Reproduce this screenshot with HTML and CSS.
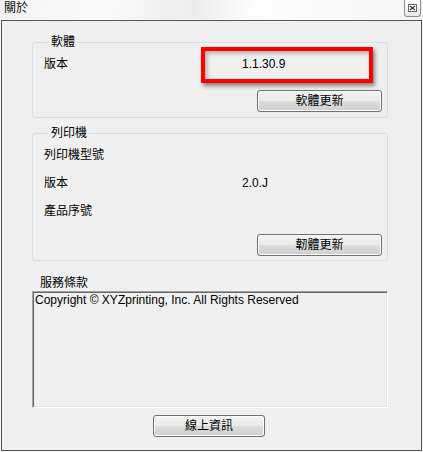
FILE: index.html
```html
<!DOCTYPE html>
<html lang="zh-Hant">
<head>
<meta charset="utf-8">
<title>關於</title>
<link rel="stylesheet" href="styles.css">
</head>
<body>
<div class="titlebar">
  <span class="title">關於</span>
  <span class="close" aria-label="close">
    <svg width="9" height="8" viewBox="0 0 9 8">
      <rect x="0.5" y="0.5" width="8" height="7" fill="#fff" stroke="#6a6a6a" stroke-width="1"/>
      <path d="M2 2 L7 6 M7 2 L2 6" stroke="#3a3a3a" stroke-width="1.3" fill="none"/>
    </svg>
  </span>
</div>
<div class="window">
  <div class="client">
    <fieldset class="group g1">
      <legend>軟體</legend>
      <div class="row">
        <span class="lbl">版本</span>
        <span class="val">1.1.30.9<span class="highlight"></span></span>
      </div>
      <div class="actions"><button class="btn wide">軟體更新</button></div>
    </fieldset>
    <fieldset class="group g2">
      <legend>列印機</legend>
      <div class="rows">
        <div class="row"><span class="lbl">列印機型號</span><span class="val"></span></div>
        <div class="row"><span class="lbl">版本</span><span class="val">2.0.J</span></div>
        <div class="row"><span class="lbl">產品序號</span><span class="val"></span></div>
      </div>
      <div class="actions"><button class="btn wide">韌體更新</button></div>
    </fieldset>
    <div class="terms-label">服務條款</div>
    <div class="terms">Copyright © XYZprinting, Inc. All Rights Reserved</div>
    <div class="footer"><button class="btn narrow">線上資訊</button></div>
  </div>
</div>
</body>
</html>
```

FILE: styles.css
```css
* { box-sizing: border-box; }
html, body {
  margin: 0;
  width: 423px;
  height: 452px;
  overflow: hidden;
}
body {
  background: #f4f4f4;
  font-family: "Liberation Sans", "Noto Sans CJK TC", sans-serif;
  font-size: 12px;
  color: #000;
}
.titlebar {
  height: 20px;
  display: flex;
  justify-content: space-between;
  align-items: flex-start;
  background: linear-gradient(100deg, #f2f2f2 0%, #fbfbfb 25%, #ececec 45%, #fdfdfd 60%, #f6f6f6 100%);
}
.title {
  padding: 2px 0 0 4px;
  line-height: 12px;
  font-size: 12px;
  color: #111;
}
.close {
  width: 17px;
  height: 17px;
  margin-right: 2px;
  border: 1px solid #8e8e8e;
  border-top: none;
  border-radius: 0 0 3px 3px;
  background: linear-gradient(#fdfdfd, #e9e9e9);
  display: flex;
  align-items: center;
  justify-content: center;
}
.window {
  margin-left: 1px;
  width: 421px;
  height: 431px;
  border: 1px solid #555;
  background: #f0f0f0;
}
.client {
  padding: 15px 0 0 30px;
}
.group {
  margin: 0;
  width: 356px;
  min-width: 0;
  border: 1px solid #d5dfe5;
  border-radius: 3px;
  padding: 8px 5px 5px 11px;
}
.group legend {
  margin-left: 5px;
  padding: 0 2px;
  line-height: 12px;
  font-size: 12px;
}
.g2 {
  margin-top: 9px;
  padding-bottom: 4px;
}
.row {
  display: grid;
  grid-template-columns: 198px 1fr;
  height: 16px;
  line-height: 16px;
}
.rows {
  display: flex;
  flex-direction: column;
  gap: 12px;
}
.val {
  position: relative;
}
.highlight {
  position: absolute;
  left: -41px;
  top: -9px;
  width: 172px;
  height: 36px;
  border: 4px solid #f00;
  box-shadow: 2px 3px 4px rgba(0,0,0,0.45), inset 2px 2px 4px rgba(0,0,0,0.3);
}
.actions {
  display: flex;
  justify-content: flex-end;
  margin-top: 18px;
}
.g2 .actions { margin-top: 15px; }
.btn {
  height: 22px;
  padding: 0;
  border: 1px solid #707070;
  border-radius: 3px;
  background: linear-gradient(#f2f2f2 0%, #ebebeb 50%, #dddddd 50%, #cfcfcf 100%);
  box-shadow: inset 0 0 0 1px #fcfcfc;
  font-family: "Liberation Sans", "Noto Sans CJK TC", sans-serif;
  font-size: 12px;
  line-height: 18px;
  color: #000;
}
.wide { width: 125px; }
.narrow { width: 112px; }
.terms-label {
  margin-top: 16px;
  padding-left: 8px;
  line-height: 12px;
  height: 12px;
  margin-bottom: 2px;
}
.terms {
  width: 356px;
  height: 117px;
  border-top: 1px solid #a0a0a0;
  border-left: 1px solid #a0a0a0;
  border-right: 1px solid #fff;
  border-bottom: 1px solid #fff;
  box-shadow: inset 1px 1px 0 #696969, inset -1px -1px 0 #e3e3e3;
  padding: 1px 2px 0 2px;
  line-height: 14px;
  background: #f0f0f0;
}
.footer {
  margin-top: 7px;
  padding-left: 121px;
}
```
